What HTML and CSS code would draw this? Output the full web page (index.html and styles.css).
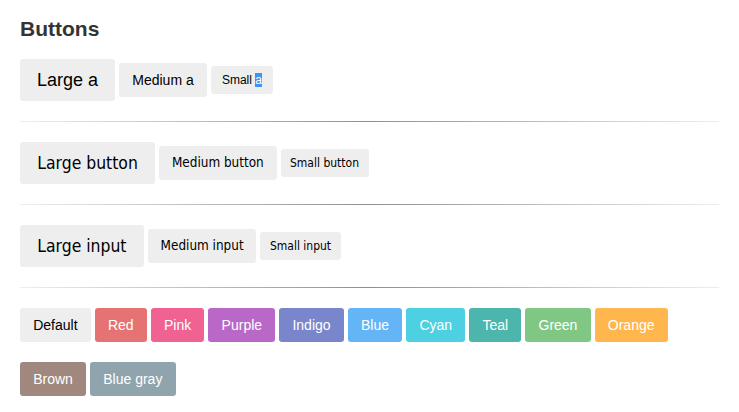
FILE: index.html
```html
<!DOCTYPE html>
<html>
<head>
<meta charset="utf-8">
<link rel="stylesheet" href="styles.css">
</head>
<body>
<div class="page">
  <h1 class="title">Buttons</h1>
  <div class="row">
    <a class="btn lg link">Large a</a>
    <a class="btn md link">Medium a</a>
    <a class="btn sm link">Small <span class="sel">a</span></a>
  </div>
  <div class="rule"></div>
  <div class="row">
    <button class="btn lg native">Large button</button>
    <button class="btn md native">Medium button</button>
    <button class="btn sm native">Small button</button>
  </div>
  <div class="rule"></div>
  <div class="row">
    <span class="btn lg native">Large input</span>
    <span class="btn md native">Medium input</span>
    <span class="btn sm native">Small input</span>
  </div>
  <div class="rule"></div>
  <div class="row wrap">
    <a class="btn md link">Default</a>
    <a class="btn md link c-red">Red</a>
    <a class="btn md link c-pink">Pink</a>
    <a class="btn md link c-purple">Purple</a>
    <a class="btn md link c-indigo">Indigo</a>
    <a class="btn md link c-blue">Blue</a>
    <a class="btn md link c-cyan">Cyan</a>
    <a class="btn md link c-teal">Teal</a>
    <a class="btn md link c-green">Green</a>
    <a class="btn md link c-orange">Orange</a>
    <a class="btn md link c-brown">Brown</a>
    <a class="btn md link c-bluegray">Blue gray</a>
  </div>
</div>
</body>
</html>
```
FILE: styles.css
```css
html, body {
  margin: 0;
  padding: 0;
  background: #fff;
}
.page {
  padding: 0 20px;
  font-family: "Liberation Sans", Arial, sans-serif;
}
.title {
  margin: 17px 0 18px;
  font-size: 21px;
  line-height: 24px;
  font-weight: bold;
  color: #333;
}
.row {
  display: flex;
  align-items: center;
  gap: 4px;
}
.row.wrap {
  flex-wrap: wrap;
  row-gap: 20px;
}
.rule {
  height: 1px;
  margin: 20px 0;
  background: linear-gradient(to right, #eeeeee, #8f8f8f, #eeeeee);
}
.btn {
  display: block;
  text-align: center;
  box-sizing: border-box;
  border: 0;
  margin: 0;
  border-radius: 3px;
  background: #eeeeee;
  color: #000;
  text-decoration: none;
  white-space: nowrap;
}
.link {
  font-family: "Liberation Sans", Arial, sans-serif;
}
.native {
  font-family: "DejaVu Sans Condensed", "DejaVu Sans", sans-serif;
}
.lg { height: 42px; line-height: 42px; padding: 0 17px; font-size: 18px; }
.md { height: 34px; line-height: 34px; padding: 0 13.2px; font-size: 14px; }
.sm { height: 28px; line-height: 28px; padding: 0 10px; font-size: 12px; }
.link.sm { padding: 0 11px; }
.native.lg { font-size: 17.4px; padding: 0 17.3px; }
.native.md { font-size: 13.4px; padding: 0 12.8px; }
.native.sm { font-size: 12px; padding: 0 9.5px; }
.sel {
  background: #3f94f5;
  color: #fff;
}
.c-red { background: #e57373; color: #fff; }
.c-pink { background: #f06292; color: #fff; }
.c-purple { background: #ba68c8; color: #fff; }
.c-indigo { background: #7986cb; color: #fff; }
.c-blue { background: #64b5f6; color: #fff; }
.c-cyan { background: #4dd0e1; color: #fff; }
.c-teal { background: #4db6ac; color: #fff; }
.c-green { background: #81c784; color: #fff; }
.c-orange { background: #ffb74d; color: #fff; }
.c-brown { background: #a1887f; color: #fff; }
.c-bluegray { background: #90a4ae; color: #fff; }
```
